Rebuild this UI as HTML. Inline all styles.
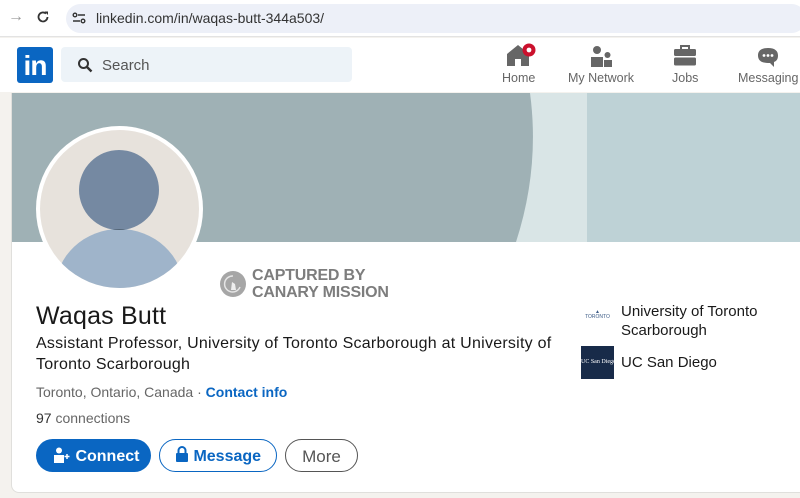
<!DOCTYPE html>
<html><head><meta charset="utf-8"><style>
*{margin:0;padding:0;box-sizing:border-box}
body{width:800px;height:498px;overflow:hidden;background:#f4f2ee;font-family:"Liberation Sans",sans-serif;position:relative}
.abs{position:absolute}
</style></head><body>
<!-- browser bar -->
<div class="abs" style="left:0;top:0;width:800px;height:37px;background:#fff;border-bottom:1px solid #e3e3e3"></div>
<div class="abs" style="left:8px;top:8px;color:#9a9a9a;font-size:16px">→</div>
<svg class="abs" style="left:36px;top:10px" width="14" height="14" viewBox="0 0 14 14"><path d="M11.5 7A4.5 4.5 0 1 1 10 3.6" fill="none" stroke="#333" stroke-width="1.8"/><path d="M8.5 1.5H12V5z" fill="#333"/></svg>
<div class="abs" style="left:66px;top:4px;width:740px;height:29px;border-radius:15px;background:#edf0f8"></div>
<svg class="abs" style="left:72px;top:11px" width="14" height="14" viewBox="0 0 14 14"><circle cx="3" cy="4" r="1.8" fill="none" stroke="#333" stroke-width="1.4"/><path d="M6 4h7M1 10h7" stroke="#333" stroke-width="1.4"/><circle cx="11" cy="10" r="1.8" fill="none" stroke="#333" stroke-width="1.4"/></svg>
<div class="abs" style="left:96px;top:10px;font-size:14px;color:#333">linkedin.com/in/waqas-butt-344a503/</div>
<!-- nav -->
<div class="abs" style="left:0;top:38px;width:800px;height:54px;background:#fff"></div>
<div class="abs" style="left:17px;top:47px;width:36px;height:36px;background:#0a66c2;border-radius:3px;color:#fff;font-weight:bold;font-size:28px;line-height:38px;text-align:center;letter-spacing:-1px">in</div>
<div class="abs" style="left:61px;top:47px;width:291px;height:35px;background:#edf3f8;border-radius:4px"></div>
<svg class="abs" style="left:77px;top:57px" width="16" height="16" viewBox="0 0 16 16"><circle cx="6.5" cy="6.5" r="4.5" fill="none" stroke="#333" stroke-width="2"/><path d="M10 10l4.5 4.5" stroke="#333" stroke-width="2.4"/></svg>
<div class="abs" style="left:102px;top:57px;font-size:15px;color:#555">Search</div>
<svg class="abs" style="left:506px;top:42px" width="32" height="26" viewBox="0 0 32 26"><path d="M1 12L12 3l11 9v12h-8v-7h-6v7H1z" fill="#666"/><circle cx="23" cy="8" r="6.5" fill="#cb112d"/><circle cx="23" cy="8" r="2.4" fill="#fff"/></svg>
<div class="abs" style="left:502px;top:71px;font-size:12.5px;color:#666">Home</div>
<svg class="abs" style="left:590px;top:45px" width="24" height="24" viewBox="0 0 24 24"><circle cx="7" cy="5" r="4" fill="#666"/><path d="M1 12h12v10H1z" fill="#666"/><circle cx="17.5" cy="10" r="3" fill="#666"/><path d="M14 15h8v7h-8z" fill="#666"/></svg>
<div class="abs" style="left:568px;top:71px;font-size:12.5px;color:#666">My Network</div>
<svg class="abs" style="left:673px;top:45px" width="24" height="22" viewBox="0 0 24 22"><path d="M8 4V1h8v3" fill="none" stroke="#666" stroke-width="2"/><rect x="1" y="4" width="22" height="7" rx="1.5" fill="#666"/><rect x="1" y="12.5" width="22" height="8" rx="1.5" fill="#666"/></svg>
<div class="abs" style="left:672px;top:71px;font-size:12.5px;color:#666">Jobs</div>
<svg class="abs" style="left:756px;top:46px" width="24" height="24" viewBox="0 0 24 24"><path d="M12 2C5 2 2 5 2 9.5S5 17 12 17h2l4 4v-5c3-1 4-3.5 4-6.5C22 5 19 2 12 2z" fill="#666"/><circle cx="8" cy="9.5" r="1.4" fill="#fff"/><circle cx="12" cy="9.5" r="1.4" fill="#fff"/><circle cx="16" cy="9.5" r="1.4" fill="#fff"/></svg>
<div class="abs" style="left:738px;top:71px;font-size:12.5px;color:#666">Messaging</div>
<!-- card -->
<div class="abs" style="left:11px;top:93px;width:800px;height:400px;background:#fff;border-radius:0 0 0 8px;border-left:1px solid #e0dfdc;border-bottom:1px solid #e0dfdc;overflow:hidden">
 <svg class="abs" style="left:0;top:0" width="800" height="149" viewBox="0 0 800 149"><rect width="800" height="149" fill="#bed2d6"/><rect width="575" height="149" fill="#d9e5e6"/><path d="M0 0H518Q528 75 504 149H0z" fill="#9fb1b5"/></svg>
</div>
<!-- avatar -->
<div class="abs" style="left:36px;top:126px;width:167px;height:166px;border-radius:50%;background:#fff;"></div>
<div class="abs" style="left:40px;top:130px;width:159px;height:158px;border-radius:50%;background:#e7e2dc;overflow:hidden">
 <svg width="159" height="158" viewBox="0 0 159 158"><ellipse cx="79.5" cy="159" rx="64" ry="60" fill="#9fb4ca"/><circle cx="79" cy="60" r="40" fill="#7589a2"/><clipPath id="c"><circle cx="79" cy="60" r="40"/></clipPath><ellipse cx="79.5" cy="159" rx="64" ry="60" fill="#546577" clip-path="url(#c)"/></svg>
</div>
<!-- canary -->
<svg class="abs" style="left:219px;top:270px" width="28" height="28" viewBox="0 0 28 28"><circle cx="14" cy="14" r="13" fill="#a6a6a6"/><path d="M14 6a8 8 0 1 0 7 11" fill="none" stroke="#e5e5e5" stroke-width="1.5"/><path d="M12 20l1-8 3 2 1 6z" fill="#eee"/></svg>
<div class="abs" style="left:252px;top:267px;font-size:16px;line-height:17px;color:#7d7d7d;font-weight:bold;letter-spacing:-0.2px">CAPTURED BY<br>CANARY MISSION</div>
<!-- text -->
<div class="abs" style="left:36px;top:302px;font-size:25px;color:#191919;letter-spacing:0.2px">Waqas Butt</div>
<div class="abs" style="left:36px;top:333px;width:545px;font-size:16px;line-height:21px;color:#191919;letter-spacing:0.25px">Assistant Professor, University of Toronto Scarborough at University of Toronto Scarborough</div>
<div class="abs" style="left:36px;top:384px;font-size:14px;color:#666">Toronto, Ontario, Canada · <b style="color:#0a66c2">Contact info</b></div>
<div class="abs" style="left:36px;top:410px;font-size:14px;color:#666"><span style="color:#333">97</span> connections</div>
<!-- buttons -->
<div class="abs" style="left:36px;top:439px;width:115px;height:33px;border-radius:17px;background:#0a66c2;color:#fff;font-weight:bold;font-size:16px;line-height:35px;padding-left:18px">
<svg style="vertical-align:-2px" width="17" height="16" viewBox="0 0 17 16"><circle cx="5" cy="3.5" r="3" fill="#fff"/><path d="M0 8h10v8H0z" fill="#fff"/><path d="M13 7v5M10.5 9.5h5" stroke="#fff" stroke-width="1.5"/></svg> Connect</div>
<div class="abs" style="left:159px;top:439px;width:118px;height:33px;border-radius:17px;border:1.5px solid #0a66c2;color:#0a66c2;font-weight:bold;font-size:16px;line-height:33px;padding-left:15px">
<svg style="vertical-align:-1px" width="14" height="16" viewBox="0 0 14 16"><path d="M3.5 7V4.5a3.5 3.5 0 0 1 7 0V7" fill="none" stroke="#0a66c2" stroke-width="2"/><rect x="1" y="7" width="12" height="9" rx="1" fill="#0a66c2"/></svg> Message</div>
<div class="abs" style="left:285px;top:439px;width:73px;height:33px;border-radius:17px;border:1.5px solid #555;color:#555;font-size:17px;line-height:33px;text-align:center">More</div>
<!-- right -->
<div class="abs" style="left:581px;top:310px;width:33px;height:16px;color:#3b5a85;font-size:5px;text-align:center;line-height:5px">▲<br>TORONTO</div>
<div class="abs" style="left:621px;top:302px;font-size:15px;line-height:19px;color:#191919">University of Toronto<br>Scarborough</div>
<div class="abs" style="left:581px;top:346px;width:33px;height:33px;background:#182b49;color:#fff;font-family:'Liberation Serif',serif;font-size:6px;line-height:33px;text-align:center;white-space:nowrap">UC San Diego</div>
<div class="abs" style="left:621px;top:354px;font-size:15px;color:#191919">UC San Diego</div>
</body></html>
